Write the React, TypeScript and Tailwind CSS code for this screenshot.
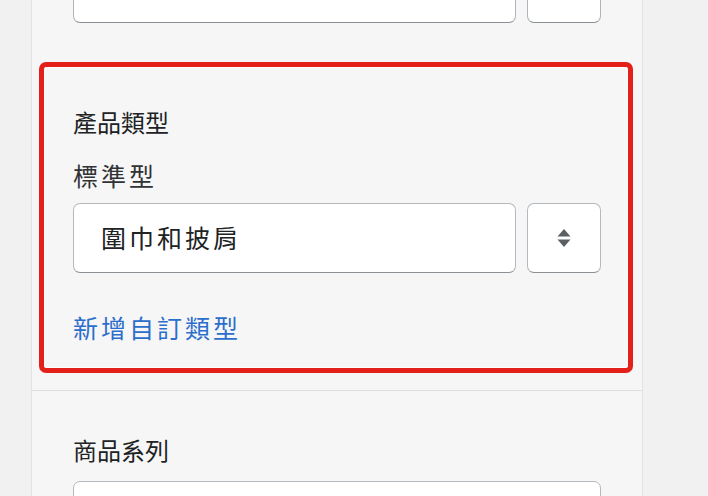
import React from "react"

const cjk = "font-['Noto_Sans_CJK_TC','Noto_Sans',sans-serif]"

const SortIcon: React.FC = () => (
    <svg width="16" height="22" viewBox="0 0 16 22" fill="#5c5f62">
        <path d="M8 2 L14.5 9.5 H1.5 Z" />
        <path d="M8 20 L14.5 12.5 H1.5 Z" />
    </svg>
)

export default function App() {
    return (
        <div className={`w-[708px] h-[496px] overflow-hidden bg-[#f1f1f2] ${cjk}`}>
            <div className="ml-[31px] w-[612px] h-full flow-root bg-[#f6f6f7] border-x border-[#e1e3e5] px-[41px]">
                {/* top row, cut off by the window */}
                <div className="-mt-[48px] flex gap-[11px] h-[71px]">
                    <div className="flex-1 bg-white border border-[#aeb4b9] border-b-[#8c9196] rounded-[7px]" />
                    <div className="w-[74px] bg-white border border-[#aeb4b9] border-b-[#8c9196] rounded-[7px]" />
                </div>

                {/* highlighted section */}
                <div className="mt-[39px] -ml-[34px] -mr-[32px] border-[5px] border-[#e4201a] rounded-[7px]">
                    <div className="border border-white/80 rounded-[3px] pt-[38px] pb-[24px] pl-[28px] pr-[26px]">
                        <div className="text-[24px] leading-[32px] text-[#202223]">產品類型</div>
                        <div className="mt-[21px] text-[25px] leading-[32px] tracking-[3px] text-[#303234]">標準型</div>
                        <div className="mt-[12px] flex gap-[11px] h-[70px]">
                            <div className="flex-1 flex items-center pl-[27px] bg-white border border-[#b4b9be] border-b-[#8c9196] rounded-[7px] text-[25px] tracking-[3px] text-[#202223]">
                                圍巾和披肩
                            </div>
                            <button className="w-[74px] flex items-center justify-center bg-white border border-[#b4b9be] border-b-[#8c9196] rounded-[7px]">
                                <SortIcon />
                            </button>
                        </div>
                        <div className="mt-[38px] text-[25px] leading-[32px] tracking-[3px] text-[#2c6ecb]">新增自訂類型</div>
                    </div>
                </div>

                {/* next section */}
                <div className="mt-[17px] -mx-[41px] border-t border-[#dcdee0] px-[41px] pt-[43px]">
                    <div className="text-[24px] leading-[32px] text-[#202223]">商品系列</div>
                    <div className="mt-[15px] h-[70px] bg-white border border-[#b4b9be] rounded-[7px]" />
                </div>
            </div>
        </div>
    )
}
